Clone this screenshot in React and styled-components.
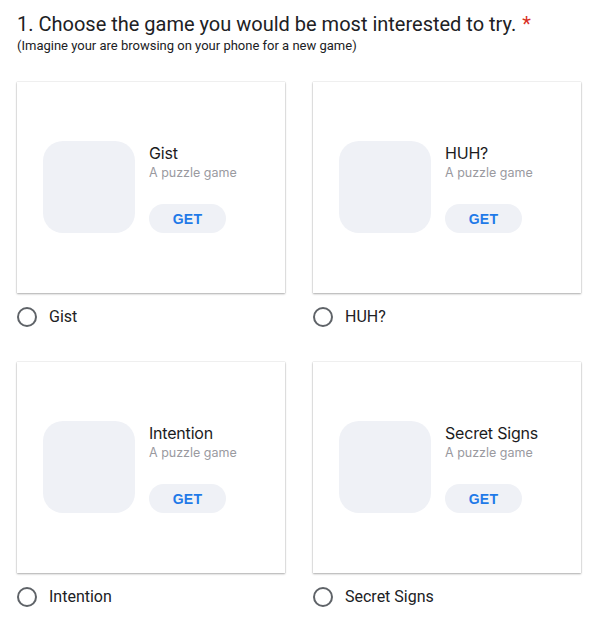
import styled, { createGlobalStyle } from 'styled-components';

const GlobalStyle = createGlobalStyle`
    body {
        margin: 0;
        background: #fff;
        font-family: Roboto, "Liberation Sans", sans-serif;
        color: #202124;
    }
`;

const Page = styled.div`
    padding: 12px 17px 20px;
`;

const Title = styled.h1`
    margin: 0;
    font-size: 20px;
    line-height: 24px;
    font-weight: 400;
    color: #202124;
`;

const Star = styled.span`
    color: #d93025;
    margin-left: 6px;
`;

const Hint = styled.p`
    margin: 1px 0 0;
    font-size: 13px;
    line-height: 17px;
    color: #202124;
`;

const Options = styled.div`
    display: grid;
    grid-template-columns: 268px 268px;
    column-gap: 28px;
    row-gap: 35px;
    margin-top: 28px;
`;

const Option = styled.div`
    display: flex;
    flex-direction: column;
`;

const Card = styled.div`
    height: 211px;
    box-sizing: border-box;
    background: #fff;
    box-shadow: 0 1px 2px rgba(0, 0, 0, 0.3), 0 0 1px rgba(0, 0, 0, 0.25);
    display: flex;
    align-items: center;
    padding: 0 0 1px 26px;
    gap: 14px;
    font-family: Inter, "Noto Sans", sans-serif;
`;

const AppIcon = styled.div`
    width: 92px;
    height: 92px;
    border-radius: 20px;
    background: #eff1f6;
    flex-shrink: 0;
`;

const Info = styled.div`
    display: flex;
    flex-direction: column;
    align-items: flex-start;
    padding-top: 2px;
`;

const AppName = styled.div`
    font-size: 16px;
    line-height: 20px;
    color: #1c1c1e;
    letter-spacing: -0.2px;
`;

const AppTag = styled.div`
    margin-top: 2px;
    font-size: 12.5px;
    line-height: 16px;
    color: #9a9a9f;
`;

const GetButton = styled.button`
    margin-top: 23px;
    width: 77px;
    height: 29px;
    border: none;
    border-radius: 15px;
    background: #eff1f6;
    color: #1f7ae8;
    font-family: "Liberation Sans", Arial, sans-serif;
    font-weight: 700;
    font-size: 14px;
    letter-spacing: 0.3px;
    padding: 0;
`;

const RadioRow = styled.label`
    display: flex;
    align-items: center;
    height: 20px;
    margin-top: 14px;
    gap: 12px;
    font-size: 16px;
    line-height: 20px;
    color: #202124;
`;

const RadioCircle = styled.span`
    width: 20px;
    height: 20px;
    box-sizing: border-box;
    border: 2px solid #5f6368;
    border-radius: 50%;
`;

const games = ['Gist', 'HUH?', 'Intention', 'Secret Signs'];

export default function App() {
    return (
        <Page>
            <GlobalStyle />
            <Title>
                1. Choose the game you would be most interested to try.<Star>*</Star>
            </Title>
            <Hint>(Imagine your are browsing on your phone for a new game)</Hint>
            <Options>
                {games.map((name) => (
                    <Option key={name}>
                        <Card>
                            <AppIcon />
                            <Info>
                                <AppName>{name}</AppName>
                                <AppTag>A puzzle game</AppTag>
                                <GetButton>GET</GetButton>
                            </Info>
                        </Card>
                        <RadioRow>
                            <RadioCircle />
                            {name}
                        </RadioRow>
                    </Option>
                ))}
            </Options>
        </Page>
    );
}
